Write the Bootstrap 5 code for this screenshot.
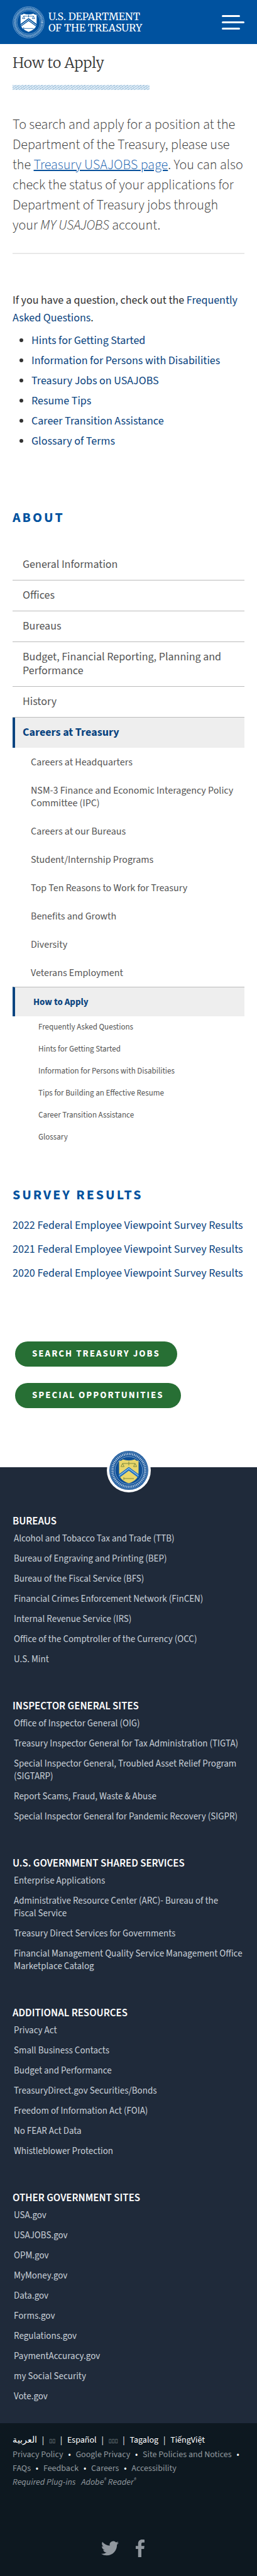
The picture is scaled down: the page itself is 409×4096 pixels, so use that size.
<!DOCTYPE html>
<html lang="en">
<head>
<meta charset="utf-8">
<meta name="viewport" content="width=device-width, initial-scale=1">
<title>How to Apply | U.S. Department of the Treasury</title>
<link rel="stylesheet" href="https://cdn.jsdelivr.net/npm/bootstrap@5.3.0/dist/css/bootstrap.min.css">
<script src="https://cdn.jsdelivr.net/npm/bootstrap@5.3.0/dist/js/bootstrap.bundle.min.js"></script>
<style>
:root{--navy:#0a4480;--blue:#00529f;--sans:"Source Sans 3","Noto Sans CJK SC","Open Sans",sans-serif;--serif:"Merriweather","DejaVu Serif Condensed","DejaVu Serif",serif}
body{font-family:var(--sans);font-size:18px;line-height:28px;color:#333}
a{color:var(--navy);text-decoration:none}
.gutter{padding-left:20px;padding-right:20px}

/* header */
.topbar{background:var(--blue);height:70px}
.brand{color:#fff;font-family:var(--serif);font-size:16px;line-height:18px;gap:6px}
.brand svg{width:51px;height:51px}
.menu-btn{border:0;background:none;padding:0;width:36px}
.menu-btn span{display:block;height:3px;border-radius:2px;background:#fff;margin-bottom:7px}
.menu-btn span:nth-child(odd){margin-right:7px}
.menu-btn span:last-child{margin-bottom:0}

/* article */
h1{font-family:var(--serif);font-weight:300;font-size:23px;line-height:36px;margin:12px 0 17px;color:#333}
.stripes{height:8px;width:59%;background:repeating-linear-gradient(145deg,#a3c4dd 0 1px,#dbe9f4 1px 3px)}
.intro{font-size:22px;font-weight:300;line-height:32px;margin:39px 0 28px;color:#333}
.intro a{text-decoration:underline;text-decoration-thickness:2px;text-decoration-color:#0a529c;color:#1a63b0}
hr{margin:0;border-top:2px solid #e8e8e8;opacity:1}
.faq{margin:60px 0 8px}
.bullets{padding-left:30px;margin:0}
.bullets li{margin-bottom:4px}
h2{font-size:22px;font-weight:700;letter-spacing:3px;line-height:32px;color:var(--blue);text-transform:uppercase}

/* section menu */
.side{margin-top:91px}
.side h2{margin-bottom:35px}
.side a{display:block;color:#555}
.lvl1>li>a{padding:13px 16px;line-height:22px;border-bottom:1px solid #bbb}
.side a.on{background:#eee;color:var(--navy);font-weight:700;border-left:4px solid var(--navy)}
.lvl1>li>a.on{border-bottom:0;padding-left:12px}
.lvl2>li>a{padding:13px 16px 12px 29px;line-height:20px;font-size:16px}
.lvl2>li>a.on{border-top:1px solid #bbb;padding-top:14px;font-size:15px}
.lvl3>li>a{padding:7px 16px 8px 41px;line-height:20px;font-size:13px}

.survey{margin-top:58px}
.survey h2{margin-bottom:19px}
.survey li{margin-bottom:10px}
.actions{gap:26px;margin:94px 4px 94px}
.pill{background:#276f34;color:#fff;font-size:15px;font-weight:700;letter-spacing:2px;line-height:40px;padding:0 27px;border-radius:20px}

/* footer */
.foot{display:flow-root;background:#1f2a3a;font-size:15px}
.seal{width:70px;height:70px;margin-top:-30px;margin-bottom:34px}
.foot h3{font-size:17px;font-weight:600;line-height:24px;margin:0 0 6px;color:#fff}
.foot section{padding-bottom:40px}
.foot section:last-child{padding-bottom:20px}
.foot li a{display:block;color:#c9d0d8;line-height:20px;margin-bottom:12px;padding-left:2px}
.base{background:#0d1820;font-size:14px;line-height:22px;color:#fff;padding-top:16px;padding-bottom:30px}
.lang a{color:#fff}
.lang .box{font-family:"DejaVu Sans",sans-serif;font-size:9px;color:#8f979d}
.sep{padding:0 5px}
.policies a,.plugins,.plugins a{color:#8f979d}
.plugins a{margin-left:6px}
.plugins sup{font-size:9px}
.social{margin-top:80px;gap:20px;padding-right:12px}
.social svg{display:block;width:28px;height:28px;fill:#90979e}
</style>
</head>
<body>
<header class="topbar gutter d-flex align-items-center justify-content-between">
<a class="brand d-flex align-items-center" href="#">
<svg viewBox="0 0 52 52" aria-hidden="true">
<circle cx="26" cy="26" r="25.3" fill="none" stroke="#8fb6dc" stroke-width=".8"/>
<circle cx="26" cy="26" r="22" fill="none" stroke="#dbe9f6" stroke-width="4" stroke-dasharray="1.3 1" opacity=".7" pathLength="144"/>
<circle cx="26" cy="26" r="18.8" fill="none" stroke="#8fb6dc" stroke-width=".7"/>
<path d="M13 13.500q3 .8 5-1.500q8 2.500 16 0q2 2.300 5 1.500v15q0 8-13 13q-13-5-13-13z" fill="#fff"/>
<path d="M13 28.500L26 19l13 9.500v5L26 24l-13 9.500z" fill="#00529f"/>
<path d="M13.500 31L26 21.600 38.500 31" fill="none" stroke="#fff" stroke-width="1"/>
<path d="M18 16h16M26 14v4M18 16l-2 4h4zM34 16l-2 4h4zM18 36h16M18 34v4" fill="none" stroke="#00529f" stroke-width=".8"/>
</svg>
<span>U.S. DEPARTMENT<br>OF THE TREASURY</span></a>
<button class="menu-btn" type="button" aria-label="Menu"><span></span><span></span><span></span></button>
</header>

<main class="gutter">
<h1>How to Apply</h1>
<div class="stripes"></div>
<p class="intro">To search and apply for a position at the Department of the Treasury, please use the&nbsp;<a href="#">Treasury USAJOBS page</a>. You can also check the status of your applications for Department of Treasury jobs through your&nbsp;<em>MY USAJOBS</em> account.</p>
<hr>
<p class="faq">If you have a question, check out the <a href="#">Frequently Asked Questions</a>.</p>
<ul class="bullets">
<li><a href="#">Hints for Getting Started</a></li>
<li><a href="#">Information for Persons with Disabilities</a></li>
<li><a href="#">Treasury Jobs on USAJOBS</a></li>
<li><a href="#">Resume Tips</a></li>
<li><a href="#">Career Transition Assistance</a></li>
<li><a href="#">Glossary of Terms</a></li>
</ul>

<nav class="side" aria-label="About">
<h2>About</h2>
<ul class="lvl1 list-unstyled">
<li><a href="#">General Information</a></li>
<li><a href="#">Offices</a></li>
<li><a href="#">Bureaus</a></li>
<li><a href="#">Budget, Financial Reporting, Planning and Performance</a></li>
<li><a href="#">History</a></li>
<li><a class="on" href="#">Careers at Treasury</a>
<ul class="lvl2 list-unstyled">
<li><a href="#">Careers at Headquarters</a></li>
<li><a href="#">NSM-3 Finance and Economic Interagency Policy Committee (IPC)</a></li>
<li><a href="#">Careers at our Bureaus</a></li>
<li><a href="#">Student/Internship Programs</a></li>
<li><a href="#">Top Ten Reasons to Work for Treasury</a></li>
<li><a href="#">Benefits and Growth</a></li>
<li><a href="#">Diversity</a></li>
<li><a href="#">Veterans Employment</a></li>
<li><a class="on" href="#" aria-current="page">How to Apply</a>
<ul class="lvl3 list-unstyled">
<li><a href="#">Frequently Asked Questions</a></li>
<li><a href="#">Hints for Getting Started</a></li>
<li><a href="#">Information for Persons with Disabilities</a></li>
<li><a href="#">Tips for Building an Effective Resume</a></li>
<li><a href="#">Career Transition Assistance</a></li>
<li><a href="#">Glossary</a></li>
</ul></li>
</ul></li>
</ul>
</nav>

<section class="survey">
<h2>Survey Results</h2>
<ul class="list-unstyled">
<li><a href="#">2022 Federal Employee Viewpoint Survey Results</a></li>
<li><a href="#">2021 Federal Employee Viewpoint Survey Results</a></li>
<li><a href="#">2020 Federal Employee Viewpoint Survey Results</a></li>
</ul>
</section>

<div class="actions d-flex flex-column align-items-start">
<a class="pill" href="#">SEARCH TREASURY JOBS</a>
<a class="pill" href="#">SPECIAL OPPORTUNITIES</a>
</div>
</main>

<footer>
<div class="foot gutter">
<svg class="seal d-block mx-auto" viewBox="0 0 70 70" aria-hidden="true">
<circle cx="35" cy="35" r="35" fill="#fff"/>
<circle cx="35" cy="35" r="31" fill="#0f4f96"/>
<circle cx="35" cy="35" r="29.500" fill="none" stroke="#9fc0e0" stroke-width=".6"/>
<circle cx="35" cy="35" r="26" fill="none" stroke="#e6eff8" stroke-width="4" stroke-dasharray="1.400 1" opacity=".7" pathLength="144"/>
<circle cx="35" cy="35" r="22" fill="#0f4f96" stroke="#9fc0e0" stroke-width=".8"/>
<path d="M19.500 19.500q3.500 .8 6-2q9.500 3.500 19 0q2.500 2.800 6 2v19q0 12-15.500 17q-15.500-5-15.500-17z" fill="#e9d66b"/>
<path d="M19.500 41L35 29.500 50.500 41v6L35 35.500 19.500 47z" fill="#1f6fc0"/>
<path d="M19.500 43.500L35 32l15.500 11.500" fill="none" stroke="#9cc9ea" stroke-width="1.200"/>
<path d="M25 24h20M35 21v6M25 24l-2.500 5h5zM45 24l-2.500 5h5zM27 48h16M27 46v4" fill="none" stroke="#7d8a3c" stroke-width="1"/>
</svg>
<section>
<h3>BUREAUS</h3>
<ul class="list-unstyled mb-0">
<li><a href="#">Alcohol and Tobacco Tax and Trade (TTB)</a></li>
<li><a href="#">Bureau of Engraving and Printing (BEP)</a></li>
<li><a href="#">Bureau of the Fiscal Service (BFS)</a></li>
<li><a href="#">Financial Crimes Enforcement Network (FinCEN)</a></li>
<li><a href="#">Internal Revenue Service (IRS)</a></li>
<li><a href="#">Office of the Comptroller of the Currency (OCC)</a></li>
<li><a href="#">U.S. Mint</a></li>
</ul>
</section>
<section>
<h3>INSPECTOR GENERAL SITES</h3>
<ul class="list-unstyled mb-0">
<li><a href="#">Office of Inspector General (OIG)</a></li>
<li><a href="#">Treasury Inspector General for Tax Administration (TIGTA)</a></li>
<li><a href="#">Special Inspector General, Troubled Asset Relief Program (SIGTARP)</a></li>
<li><a href="#">Report Scams, Fraud, Waste &amp; Abuse</a></li>
<li><a href="#">Special Inspector General for Pandemic Recovery (SIGPR)</a></li>
</ul>
</section>
<section>
<h3>U.S. GOVERNMENT SHARED SERVICES</h3>
<ul class="list-unstyled mb-0">
<li><a href="#">Enterprise Applications</a></li>
<li><a href="#">Administrative Resource Center (ARC)- Bureau of the Fiscal&nbsp;Service</a></li>
<li><a href="#">Treasury Direct Services for Governments</a></li>
<li><a href="#">Financial Management Quality Service Management Office Marketplace Catalog</a></li>
</ul>
</section>
<section>
<h3>ADDITIONAL RESOURCES</h3>
<ul class="list-unstyled mb-0">
<li><a href="#">Privacy Act</a></li>
<li><a href="#">Small Business Contacts</a></li>
<li><a href="#">Budget and Performance</a></li>
<li><a href="#">TreasuryDirect.gov Securities/Bonds</a></li>
<li><a href="#">Freedom of Information Act (FOIA)</a></li>
<li><a href="#">No FEAR Act Data</a></li>
<li><a href="#">Whistleblower Protection</a></li>
</ul>
</section>
<section>
<h3>OTHER GOVERNMENT SITES</h3>
<ul class="list-unstyled mb-0">
<li><a href="#">USA.gov</a></li>
<li><a href="#">USAJOBS.gov</a></li>
<li><a href="#">OPM.gov</a></li>
<li><a href="#">MyMoney.gov</a></li>
<li><a href="#">Data.gov</a></li>
<li><a href="#">Forms.gov</a></li>
<li><a href="#">Regulations.gov</a></li>
<li><a href="#">PaymentAccuracy.gov</a></li>
<li><a href="#">my Social Security</a></li>
<li><a href="#">Vote.gov</a></li>
</ul>
</section>
</div>

<div class="base gutter">
<div class="lang"><a href="#">العربية</a> <span class="sep">|</span> <a class="box" href="#">▯▯</a> <span class="sep">|</span> <a href="#">Español</a> <span class="sep">|</span> <a class="box" href="#">▯▯▯</a> <span class="sep">|</span> <a href="#">Tagalog</a> <span class="sep">|</span> <a href="#">TiếngViệt</a></div>
<div class="policies"><a href="#">Privacy Policy</a> <span class="sep">•</span> <a href="#">Google Privacy</a> <span class="sep">•</span> <a href="#">Site Policies and Notices</a> <span class="sep">•</span> <a href="#">FAQs</a> <span class="sep">•</span> <a href="#">Feedback</a> <span class="sep">•</span> <a href="#">Careers</a> <span class="sep">•</span> <a href="#">Accessibility</a></div>
<div class="plugins fst-italic">Required Plug-ins <a href="#">Adobe<sup>®</sup> Reader<sup>®</sup></a></div>
<div class="social d-flex justify-content-center">
<a href="#" aria-label="Twitter"><svg viewBox="0 0 24 24"><path d="M24 4.600a10 10 0 0 1-2.800.8 4.900 4.900 0 0 0 2.100-2.700 9.800 9.800 0 0 1-3.100 1.200 4.900 4.900 0 0 0-8.400 4.500A14 14 0 0 1 1.700 3.200a4.900 4.900 0 0 0 1.500 6.500 4.900 4.900 0 0 1-2.200-.6v.1a4.900 4.900 0 0 0 3.900 4.800 5 5 0 0 1-2.200.1 4.900 4.900 0 0 0 4.600 3.400A9.900 9.900 0 0 1 0 19.500a14 14 0 0 0 7.500 2.200c9.100 0 14-7.500 14-14v-.6A10 10 0 0 0 24 4.600z"/></svg></a>
<a href="#" aria-label="Facebook"><svg viewBox="0 0 28 28"><path d="M21 .3v4.500h-2.600c-2 0-2.400 1-2.400 2.400v3.100h4.900l-.7 4.800H16V28h-5.200V15.100H7v-4.800h3.800V6.700C10.800 2.400 13.400 0 17.200 0c1.800 0 3.300.1 3.800.3z"/></svg></a>
</div>
</div>
</footer>
</body>
</html>
